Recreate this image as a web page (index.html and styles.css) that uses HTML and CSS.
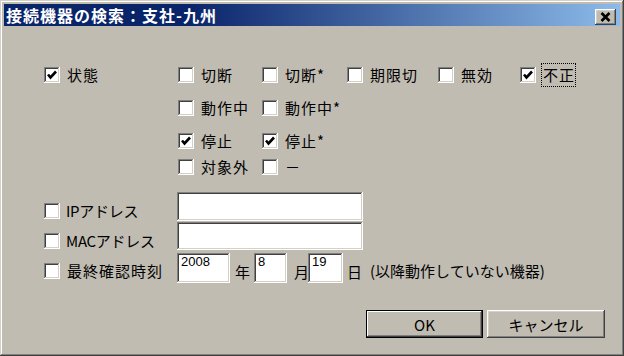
FILE: index.html
```html
<!DOCTYPE html>
<html lang="ja">

<head>
    <meta charset="utf-8">
    <title>接続機器の検索</title>
    <link rel="stylesheet" href="styles.css">
</head>

<body>
    <div class="dialog">
        <div class="titlebar">
            <span class="caption">接続機器の検索：支社-九州</span>
            <button class="close">
                <svg width="11" height="10" viewBox="0 0 11 10">
                    <path d="M1.5 1 L9.5 9 M9.5 1 L1.5 9" stroke="#000" stroke-width="2.6" />
                </svg>
            </button>
        </div>

        <div class="content">
            <div class="status">
                <label class="opt"><span class="chk on"></span>状態</label>
                <label class="opt"><span class="chk"></span>切断</label>
                <label class="opt"><span class="chk"></span>切断*</label>
                <label class="opt"><span class="chk"></span>期限切</label>
                <label class="opt"><span class="chk"></span>無効</label>
                <label class="opt"><span class="chk on"></span><span class="focus">不正</span></label>

                <label class="opt c2"><span class="chk"></span>動作中</label>
                <label class="opt"><span class="chk"></span>動作中*</label>

                <label class="opt c2"><span class="chk on"></span>停止</label>
                <label class="opt"><span class="chk on"></span>停止*</label>

                <label class="opt c2"><span class="chk"></span>対象外</label>
                <label class="opt"><span class="chk"></span>－</label>
            </div>

            <div class="filters">
                <div class="row ip">
                    <label class="opt lbl tight"><span class="chk"></span>IPアドレス</label>
                    <div class="field wide"></div>
                </div>
                <div class="row mac">
                    <label class="opt lbl tight"><span class="chk"></span>MACアドレス</label>
                    <div class="field wide"></div>
                </div>
                <div class="row date">
                    <label class="opt lbl"><span class="chk"></span>最終確認時刻</label>
                    <div class="field year">2008</div>
                    <span class="unit nen">年</span>
                    <div class="field month">8</div>
                    <span class="unit tsuki">月</span>
                    <div class="field day">19</div>
                    <span class="unit hi">日</span>
                    <span class="note">(以降動作していない機器)</span>
                </div>
            </div>

            <div class="buttons">
                <button class="btn default">OK</button>
                <button class="btn">キャンセル</button>
            </div>
        </div>
    </div>
</body>

</html>
```

FILE: styles.css
```css
body {
    margin: 0;
    font-family: "Noto Sans CJK JP", "Noto Sans", sans-serif;
    font-size: 15px;
    color: #000;
}

.dialog {
    box-sizing: border-box;
    width: 624px;
    height: 356px;
    padding: 4px;
    background-color: #c0bcb2;
    box-shadow: inset -1px -1px #404040, inset 1px 1px #d4d0c8,
        inset -2px -2px #808080, inset 2px 2px #fff;
}

.titlebar {
    height: 22px;
    display: flex;
    align-items: center;
    justify-content: space-between;
    padding: 0 4px 0 2px;
    background: linear-gradient(to right, #0a246a 0%, #0a246a 30%, #8cbbea 100%);
}

.caption {
    color: #fff;
    font-weight: bold;
    font-size: 16px;
    letter-spacing: 1px;
    line-height: 22px;
}

.close {
    width: 21px;
    height: 16px;
    margin-top: 3px;
    padding: 0;
    border: none;
    display: flex;
    align-items: center;
    justify-content: center;
    background-color: #c0bcb2;
    box-shadow: inset -1px -1px #404040, inset 1px 1px #fff,
        inset -2px -2px #808080, inset 2px 2px #d4d0c8;
}

.content {
    padding: 41px 0 0 40px;
}

.status {
    display: grid;
    grid-template-columns: 134px 84px 85px 91px 82px auto;
    grid-template-rows: 33px 33px 26px 16px;
}

.c2 {
    grid-column: 2;
}

.opt {
    display: flex;
    align-items: center;
    gap: 7px;
    height: 16px;
    line-height: 16px;
    letter-spacing: 1px;
    white-space: nowrap;
}

.opt.tight {
    letter-spacing: -0.3px;
    gap: 6px;
}

.chk {
    flex: none;
    width: 16px;
    height: 16px;
    background-color: #fff;
    box-shadow: inset -1px -1px #fff, inset 1px 1px #808080,
        inset -2px -2px #d4d0c8, inset 2px 2px #404040;
}

.chk.on {
    background-image: url("data:image/svg+xml,%3Csvg xmlns='http://www.w3.org/2000/svg' width='16' height='16'%3E%3Cpath d='M4 7.5 L6.5 10.5 L12 4.5' fill='none' stroke='%23000' stroke-width='2.6'/%3E%3C/svg%3E");
}

.focus {
    outline: 1px dotted #000;
    outline-offset: 0;
    padding: 3px 0 3px 1px;
    margin: -3px 0 -3px -1px;
}

.filters {
    margin-top: 17px;
}

.row {
    display: flex;
    align-items: flex-start;
}

.row.ip {
    height: 29px;
    margin-bottom: 1px;
}

.row.mac {
    height: 28px;
    margin-bottom: 3px;
}

.row.date {
    height: 30px;
}

.lbl {
    width: 133px;
    margin-top: 11px;
}

.row.date .lbl {
    margin-top: 10px;
}

.field {
    box-sizing: border-box;
    height: 100%;
    padding: 2px 4px;
    background-color: #fff;
    font-family: "Liberation Sans", Arial, sans-serif;
    font-size: 13px;
    line-height: 13px;
    box-shadow: inset -1px -1px #fff, inset 1px 1px #808080,
        inset -2px -2px #d4d0c8, inset 2px 2px #404040;
}

.field.wide {
    width: 186px;
}

.field.year {
    width: 53px;
}

.field.month {
    width: 33px;
}

.field.day {
    width: 35px;
}

.unit {
    align-self: flex-end;
    line-height: 16px;
    margin-bottom: 3px;
}

.unit.nen {
    margin-left: 5px;
    margin-right: 4px;
}

.unit.tsuki {
    margin-left: 7px;
    margin-right: -1px;
}

.unit.hi {
    margin-left: 4px;
    margin-right: 8px;
}

.note {
    align-self: flex-end;
    line-height: 16px;
    margin-bottom: 4px;
    letter-spacing: 0;
}

.buttons {
    display: flex;
    justify-content: flex-end;
    gap: 4px;
    margin-top: 27px;
    padding-right: 15px;
}

.btn {
    width: 118px;
    height: 28px;
    padding: 0;
    border: none;
    font-family: "Noto Sans CJK JP", "Noto Sans", sans-serif;
    font-size: 15px;
    color: #000;
    background-color: #c0bcb2;
    box-shadow: inset -1px -1px #404040, inset 1px 1px #fff,
        inset -2px -2px #808080, inset 2px 2px #d4d0c8;
}

.btn.default {
    width: 117px;
    box-shadow: inset 0 0 0 1px #000, inset -2px -2px #404040,
        inset 2px 2px #fff, inset -3px -3px #808080;
}
```
